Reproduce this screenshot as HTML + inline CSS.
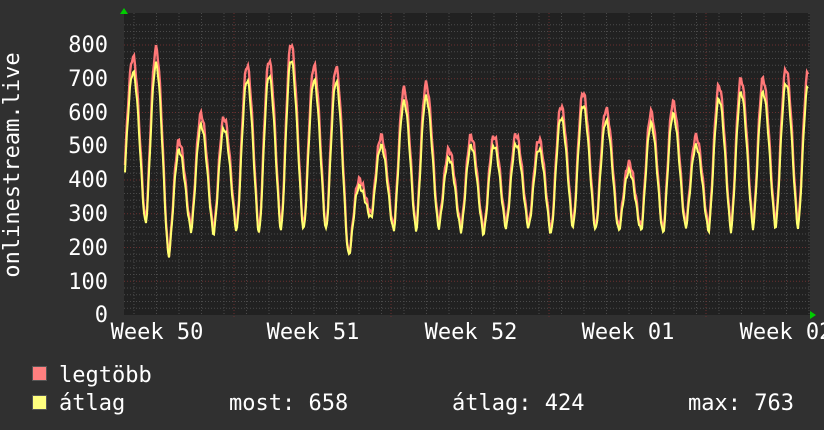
<!DOCTYPE html>
<html><head><meta charset="utf-8"><style>
body{margin:0;background:#303030;width:824px;height:430px;overflow:hidden;font-family:"DejaVu Sans Mono","Liberation Mono",monospace;color:#fff}
svg{position:absolute;left:0;top:0}
text{font-family:"DejaVu Sans Mono","Liberation Mono",monospace;fill:#fff;font-size:22px}
</style></head><body>
<svg width="824" height="430" id="s">
<rect x="124" y="13" width="686" height="302" fill="#212121"/>
<g id="grid"></g>
<polyline id="r" fill="none" stroke="#ff7878" stroke-width="2.4"/>
<polyline id="yl" fill="none" stroke="#ffff70" stroke-width="2"/>
<polygon points="120,14 128,14 124,8" fill="#00cc00"/>
<polygon points="810,311 810,319 816,315" fill="#00cc00"/>
<g text-anchor="end">
<text x="108" y="52">800</text><text x="108" y="86">700</text><text x="108" y="120">600</text><text x="108" y="153">500</text><text x="108" y="187">400</text><text x="108" y="221">300</text><text x="108" y="255">200</text><text x="108" y="289">100</text><text x="108" y="322">0</text>
</g>
<text transform="translate(19,165) rotate(-90)" text-anchor="middle">onlinestream.live</text>
<g text-anchor="middle">
<text x="157" y="339">Week 50</text><text x="313" y="339">Week 51</text><text x="471" y="339">Week 52</text><text x="628" y="339">Week 01</text><text x="786" y="339">Week 02</text>
</g>
<rect x="32.5" y="366.5" width="14" height="14" fill="#ff7f7f" stroke="#555"/>
<rect x="32.5" y="395.5" width="14" height="14" fill="#ffff7f" stroke="#555"/>
<text x="59" y="382">legtöbb</text>
<text x="59" y="410">átlag</text>
<text x="229" y="410">most: 658</text>
<text x="452" y="410">átlag: 424</text>
<text x="688" y="410">max: 763</text>
</svg>
<script>
var g=document.getElementById('grid'),h='';
for(var v=20;v<=860;v+=20){var y=315-v*0.3375;if(y<13)break;var maj=v%100==0;
h+='<line x1="124" x2="810" y1="'+y+'" y2="'+y+'" stroke="'+(maj?'#6a3030':'#4a4a4a')+'" stroke-dasharray="1,2"/>';}
for(var x=134;x<810;x+=22.5){h+='<line y1="13" y2="315" x1="'+x+'" x2="'+x+'" stroke="#4a4a4a" stroke-dasharray="1,2"/>';}
[234,391,549,706].forEach(function(x){h+='<line y1="13" y2="318" x1="'+x+'" x2="'+x+'" stroke="#6a3030" stroke-dasharray="1,2"/>';});
g.innerHTML=h;
var pk=[[133,765],[156,790],[179,515],[201,595],[224,585],[247,740],[269,755],[291,805],[314,740],[336,735],[359,400],[381,530],[404,670],[426,685],[449,490],[471,530],[494,530],[516,535],[539,520],[561,620],[583,660],[606,610],[629,450],[651,600],[673,630],[696,530],[719,680],[741,700],[763,700],[786,730],[808,720]];
var mins=[300,280,180,260,250,260,250,260,260,260,180,300,260,260,270,260,250,270,270,250,270,260,260,260,250,270,260,260,270,270,270];
function shape(u){var c=(1+Math.cos(Math.PI*u))/2;return Math.pow(c,0.8);}
function val(x){var i=0;while(i<pk.length-1&&pk[i+1][0]<x)i++;
var a=pk[i],b=pk[Math.min(i+1,pk.length-1)];
if(x<=a[0]){var t=Math.min(1,(a[0]-x)/12);return mins[i]+(a[1]-mins[i])*shape(t);}
var d=(b[0]-a[0])||22,t=(x-a[0])/d,m=mins[i+1]||270,tm=0.55;
if(t<tm)return m+(a[1]-m)*shape(t/tm);
return m+(b[1]-m)*shape(1-(t-tm)/(1-tm));}
var rp='',yp='';
for(var x=125;x<=808;x++){var v=val(x),n=Math.sin(x*1.7)*10;
var rv=v+n,yv=v*0.93+n*0.8+8;if(yv<170)yv=170;
rp+=x+','+(315-rv*0.3375).toFixed(1)+' ';yp+=x+','+(315-yv*0.3375).toFixed(1)+' ';}
document.getElementById('r').setAttribute('points',rp);
document.getElementById('yl').setAttribute('points',yp);
</script>
</body></html>
